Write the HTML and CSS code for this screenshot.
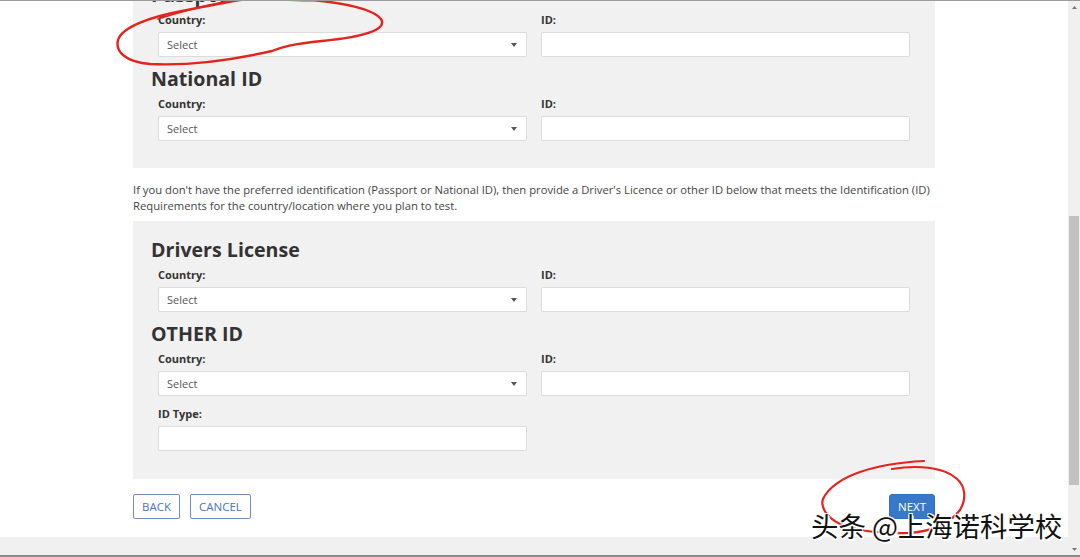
FILE: index.html
```html
<!DOCTYPE html>
<html lang="en">
<head>
<meta charset="utf-8">
<title>Identification</title>
<link rel="stylesheet" href="styles.css">
</head>
<body>
<div class="screen">
  <div class="viewport">
    <div class="page">
      <main class="container">
        <section class="panel panel-first">
          <h2 class="panel-title">Passport</h2>
          <div class="grid">
            <div class="field">
              <label class="label">Country:</label>
              <div class="select"><span>Select</span><svg class="caret" width="6" height="4" viewBox="0 0 6 4"><path d="M0 0h6L3 4z" fill="#555"/></svg></div>
            </div>
            <div class="field">
              <label class="label">ID:</label>
              <div class="input"></div>
            </div>
          </div>
          <h2 class="panel-title">National ID</h2>
          <div class="grid">
            <div class="field">
              <label class="label">Country:</label>
              <div class="select"><span>Select</span><svg class="caret" width="6" height="4" viewBox="0 0 6 4"><path d="M0 0h6L3 4z" fill="#555"/></svg></div>
            </div>
            <div class="field">
              <label class="label">ID:</label>
              <div class="input"></div>
            </div>
          </div>
        </section>

        <p class="note">If you don't have the preferred identification (Passport or National ID), then provide a Driver's Licence or other ID below that meets the Identification (ID) Requirements for the country/location where you plan to test.</p>

        <section class="panel">
          <h2 class="panel-title">Drivers License</h2>
          <div class="grid">
            <div class="field">
              <label class="label">Country:</label>
              <div class="select"><span>Select</span><svg class="caret" width="6" height="4" viewBox="0 0 6 4"><path d="M0 0h6L3 4z" fill="#555"/></svg></div>
            </div>
            <div class="field">
              <label class="label">ID:</label>
              <div class="input"></div>
            </div>
          </div>
          <h2 class="panel-title">OTHER ID</h2>
          <div class="grid">
            <div class="field">
              <label class="label">Country:</label>
              <div class="select"><span>Select</span><svg class="caret" width="6" height="4" viewBox="0 0 6 4"><path d="M0 0h6L3 4z" fill="#555"/></svg></div>
            </div>
            <div class="field">
              <label class="label">ID:</label>
              <div class="input"></div>
            </div>
          </div>
          <div class="grid">
            <div class="field">
              <label class="label">ID Type:</label>
              <div class="input"></div>
            </div>
          </div>
        </section>

        <div class="actions">
          <div class="actions-left">
            <button class="btn btn-outline">BACK</button>
            <button class="btn btn-outline">CANCEL</button>
          </div>
          <button class="btn btn-primary">NEXT</button>
        </div>
      </main>
      <div class="footer-band"></div>
    </div>
    <div class="scrollbar">
      <div class="sb-btn"><svg width="5" height="3" viewBox="0 0 5 3"><path d="M0 3h5L2.5 0z" fill="#777"/></svg></div>
      <div class="sb-thumb"></div>
      <div class="sb-space"></div>
      <div class="sb-btn"><svg width="5" height="3" viewBox="0 0 5 3"><path d="M0 0h5L2.5 3z" fill="#777"/></svg></div>
    </div>
  </div>

  <svg class="annotations" width="1080" height="557" viewBox="0 0 1080 557">
    <path d="M300,-1 C340,2 372,8 381,19 C388,30 362,37 322,41 C292,44 282,47 272,51 C232,60 190,66 150,64 C126,62 115,52 118,40 C122,27 150,17 182,11 C202,7 222,3 240,0 C270,-3 300,2 330,0" fill="none" stroke="#e3241d" stroke-width="2.4" stroke-linecap="round"/>
    <path d="M158,19 C185,10 212,4 240,-1" fill="none" stroke="#e3241d" stroke-width="1.8" stroke-linecap="round"/>
    <path d="M924,461 C905,462 880,465 860,472 C842,478 828,488 823,499 C820,508 828,518 840,524 C855,531 885,534 908,533 C930,532 950,524 960,510 C967,498 965,486 957,479 C948,471 932,467 915,467 C905,467 898,468 892,469" fill="none" stroke="#e3241d" stroke-width="2.2" stroke-linecap="round"/>
  </svg>

  <div class="watermark">头条 @上海诺科学校</div>
</div>
</body>
</html>
```
FILE: styles.css
```css
* { box-sizing: border-box; }

html, body {
  margin: 0;
  padding: 0;
  width: 1080px;
  height: 557px;
  overflow: hidden;
  background: #ffffff;
  font-family: "Open Sans", "Noto Sans", "Liberation Sans", sans-serif;
  color: #333333;
}

.screen {
  position: relative;
  width: 1080px;
  height: 557px;
  border-top: 1px solid #9c9c9c;
  border-bottom: 2px solid #8a8a8a;
  overflow: hidden;
}

.viewport {
  display: flex;
  height: 554px;
}

.page {
  flex: 1;
  display: flex;
  flex-direction: column;
  min-width: 0;
}

.container {
  flex: 1;
  width: 802px;
  margin: 0 auto;
  overflow: hidden;
}

.panel {
  background: #f1f1f1;
  padding: 17px 25px 18px 18px;
}

.panel-first {
  margin-top: -35px;
  padding-bottom: 17px;
}

.panel-title {
  margin: 0 0 5px 0;
  font-size: 19.6px;
  line-height: 24px;
  font-weight: 700;
  color: #333333;
}

.grid {
  display: grid;
  grid-template-columns: 369px 369px;
  column-gap: 14px;
  margin: 0 0 10px 7px;
}

.field {
  display: flex;
  flex-direction: column;
}

.label {
  display: block;
  font-size: 11px;
  line-height: 15px;
  font-weight: 700;
  color: #333333;
  margin-bottom: 5px;
}

.select, .input {
  height: 25px;
  background: #ffffff;
  border: 1px solid #dcdcdc;
  border-radius: 2px;
}

.select {
  display: flex;
  align-items: center;
  justify-content: space-between;
  padding: 0 9px 0 8px;
  font-size: 11px;
  color: #555555;
}

.caret {
  display: block;
}

.note {
  margin: 14px 0 7px 0;
  font-size: 11.25px;
  line-height: 16px;
  color: #444444;
}

.actions {
  display: flex;
  justify-content: space-between;
  margin-top: 15px;
}

.actions-left {
  display: flex;
  gap: 10px;
}

.btn {
  height: 25px;
  padding: 0 8px;
  font-family: "Open Sans", "Noto Sans", "Liberation Sans", sans-serif;
  font-size: 11.5px;
  line-height: 23px;
  border-radius: 2px;
  cursor: pointer;
}

.btn-outline {
  background: #ffffff;
  border: 1px solid #6f90bd;
  color: #4a76b2;
}

.btn-primary {
  background: #3878c8;
  border: 1px solid #3070c0;
  color: #ffffff;
  border-radius: 3px;
  padding: 0 8px;
}

.footer-band {
  height: 18px;
  background: #f0f0f0;
}

.scrollbar {
  width: 12px;
  background: #f0f0f0;
  display: flex;
  flex-direction: column;
  align-items: center;
}

.sb-btn {
  height: 12px;
  width: 12px;
  display: flex;
  align-items: center;
  justify-content: center;
}

.sb-thumb {
  margin-top: 203px;
  width: 10px;
  height: 269px;
  background: #c1c1c1;
}

.sb-space {
  flex: 1;
}

.annotations {
  position: absolute;
  left: 0;
  top: -1px;
  pointer-events: none;
}

.watermark {
  position: absolute;
  left: 811px;
  top: 508px;
  font-family: "Noto Sans CJK SC", "Noto Sans", sans-serif;
  font-size: 27.4px;
  line-height: 32px;
  color: #111111;
  white-space: nowrap;
  text-shadow: -1px -1px 0 #fff, 1px -1px 0 #fff, -1px 1px 0 #fff, 1px 1px 0 #fff, 2px 2px 1px #fff;
}
```
